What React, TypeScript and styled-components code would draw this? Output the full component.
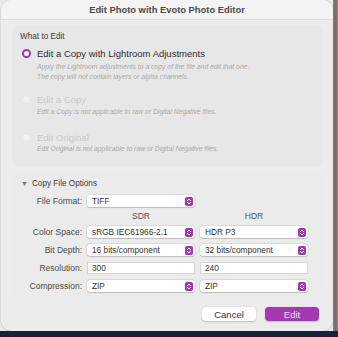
import React from "react";
import styled, { createGlobalStyle } from "styled-components";

const Global = createGlobalStyle`
  html, body { margin: 0; padding: 0; }
  body { font-family: "Liberation Sans", Arial, sans-serif; background: #1c2638; }
`;

const Screen = styled.div`
  width: 338px;
  height: 337px;
  overflow: hidden;
  background:
    linear-gradient(180deg, transparent 0, transparent 331px, #18233a 331px),
    linear-gradient(90deg, #e8ecea 0, #e8ecea 333px, #8d8178 333px, #6f6a6a 336px, #9a8f86 338px);
`;

const Dialog = styled.div`
  width: 332px;
  height: 331px;
  margin-left: 1px;
  background: #ececec;
  border-radius: 10px;
  overflow: hidden;
  display: flex;
  flex-direction: column;
  box-shadow: 0 0 0 0.5px rgba(0,0,0,0.15);
`;

const TitleBar = styled.div`
  height: 19px;
  flex: none;
  background: #f4f4f4;
  border-bottom: 1px solid #dedede;
  display: flex;
  align-items: center;
  justify-content: center;
  font-size: 9.4px;
  font-weight: bold;
  color: #4a4a4a;
`;

const Body = styled.div`
  padding: 6px 10px 0 11px;
  display: flex;
  flex-direction: column;
`;

const Group = styled.div<{ $h: number; $bg: string }>`
  height: ${(p) => p.$h}px;
  background: ${(p) => p.$bg};
  border-radius: 5px;
  padding: 0 8px;
  display: flex;
  flex-direction: column;
`;

const GroupTitle = styled.div`
  font-size: 8.2px;
  color: #3d3d3d;
  margin-top: 5px;
  height: 12px;
  line-height: 12px;
`;

const RadioRow = styled.div<{ $disabled?: boolean; $mt: number }>`
  display: flex;
  align-items: center;
  gap: 6px;
  margin-left: 2px;
  margin-top: ${(p) => p.$mt}px;
  font-size: 9.5px;
  color: ${(p) => (p.$disabled ? "#c9c9c9" : "#2e2e2e")};
  height: 14px;
`;

const RadioDot = styled.span<{ $on?: boolean }>`
  width: 9px;
  height: 9px;
  border-radius: 50%;
  box-sizing: border-box;
  background: ${(p) => (p.$on ? "#fff" : "#f1f1f1")};
  border: ${(p) => (p.$on ? "2.5px solid #a434b0" : "1px solid #e4e4e4")};
  flex: none;
`;

const Desc = styled.div<{ $mt?: number }>`
  margin-left: 17px;
  margin-top: ${(p) => p.$mt ?? 0}px;
  font-size: 6.8px;
  font-style: italic;
  color: #a9a9a9;
  line-height: 10px;
`;

const SectionHead = styled.div`
  display: flex;
  align-items: center;
  gap: 4px;
  font-size: 8.2px;
  color: #3a3a3a;
  margin: 5px 0 0 1px;
  height: 12px;
`;

const Tri = styled.span`
  font-size: 7px;
  color: #777;
`;

const FormGrid = styled.div`
  display: grid;
  grid-template-columns: 62px 108px 108px;
  column-gap: 5px;
  row-gap: 6px;
  align-items: center;
  margin-top: 6px;
`;

const Label = styled.div`
  text-align: right;
  font-size: 8.5px;
  color: #4a4a4a;
`;

const ColHead = styled.div`
  text-align: center;
  font-size: 8.5px;
  color: #555;
  height: 10px;
  line-height: 10px;
  margin: -2px 0 -1px;
`;

const Select = styled.div`
  height: 12px;
  background: #fff;
  border-radius: 3px;
  box-shadow: 0 0 0 0.5px rgba(0,0,0,0.12), 0 0.5px 1px rgba(0,0,0,0.15);
  display: flex;
  align-items: center;
  justify-content: space-between;
  padding: 0 2px 0 5px;
  font-size: 8.3px;
  color: #333;
`;

const Stepper = styled.span`
  width: 8px;
  height: 9px;
  border-radius: 2px;
  background: #a434b0;
  display: flex;
  align-items: center;
  justify-content: center;
`;

const Field = styled.div`
  height: 12px;
  background: #fff;
  border: 0.5px solid #d6d6d6;
  box-sizing: border-box;
  display: flex;
  align-items: center;
  padding-left: 4px;
  font-size: 8.3px;
  color: #333;
`;

const Footer = styled.div`
  display: flex;
  justify-content: flex-end;
  gap: 9px;
  padding: 10px 4px 0 0;
`;

const Button = styled.div<{ $primary?: boolean }>`
  width: 54px;
  height: 14px;
  border-radius: 4px;
  display: flex;
  align-items: center;
  justify-content: center;
  font-size: 9.5px;
  background: ${(p) => (p.$primary ? "#a737b2" : "#fff")};
  color: ${(p) => (p.$primary ? "#f4dcf6" : "#333")};
  box-shadow: 0 0.5px 1.5px rgba(0,0,0,0.2);
`;

const StepIcon = () => (
  <svg width="6" height="7" viewBox="0 0 6 7">
    <path d="M1.3 2.7 L3 1.1 L4.7 2.7 M1.3 4.3 L3 5.9 L4.7 4.3" fill="none" stroke="#fff" strokeWidth="1" strokeLinecap="round" strokeLinejoin="round" />
  </svg>
);

const Sel = ({ v }: { v: string }) => (
  <Select>
    <span>{v}</span>
    <Stepper>
      <StepIcon />
    </Stepper>
  </Select>
);

export default function App() {
  return (
    <Screen>
      <Global />
      <Dialog>
        <TitleBar>Edit Photo with Evoto Photo Editor</TitleBar>
        <Body>
          <Group $h={140} $bg="#e7e7e7">
            <GroupTitle>What to Edit</GroupTitle>
            <RadioRow $mt={3}>
              <RadioDot $on />
              Edit a Copy with Lightroom Adjustments
            </RadioRow>
            <Desc $mt={2}>
              Apply the Lightroom adjustments to a copy of the file and edit that one.
              <br />
              The copy will not contain layers or alpha channels.
            </Desc>
            <RadioRow $disabled $mt={10}>
              <RadioDot />
              Edit a Copy
            </RadioRow>
            <Desc $mt={1}>Edit a Copy is not applicable to raw or Digital Negative files.</Desc>
            <RadioRow $disabled $mt={13}>
              <RadioDot />
              Edit Original
            </RadioRow>
            <Desc>Edit Original is not applicable to raw or Digital Negative files.</Desc>
          </Group>
          <Group $h={125} $bg="#ebebeb" style={{ marginTop: 6 }}>
            <SectionHead>
              <Tri>▼</Tri>Copy File Options
            </SectionHead>
            <FormGrid>
              <Label>File Format:</Label>
              <Sel v="TIFF" />
              <div />
              <div />
              <ColHead>SDR</ColHead>
              <ColHead>HDR</ColHead>
              <Label>Color Space:</Label>
              <Sel v="sRGB IEC61966-2.1" />
              <Sel v="HDR P3" />
              <Label>Bit Depth:</Label>
              <Sel v="16 bits/component" />
              <Sel v="32 bits/component" />
              <Label>Resolution:</Label>
              <Field>300</Field>
              <Field>240</Field>
              <Label>Compression:</Label>
              <Sel v="ZIP" />
              <Sel v="ZIP" />
            </FormGrid>
          </Group>
          <Footer>
            <Button>Cancel</Button>
            <Button $primary>Edit</Button>
          </Footer>
        </Body>
      </Dialog>
    </Screen>
  );
}
